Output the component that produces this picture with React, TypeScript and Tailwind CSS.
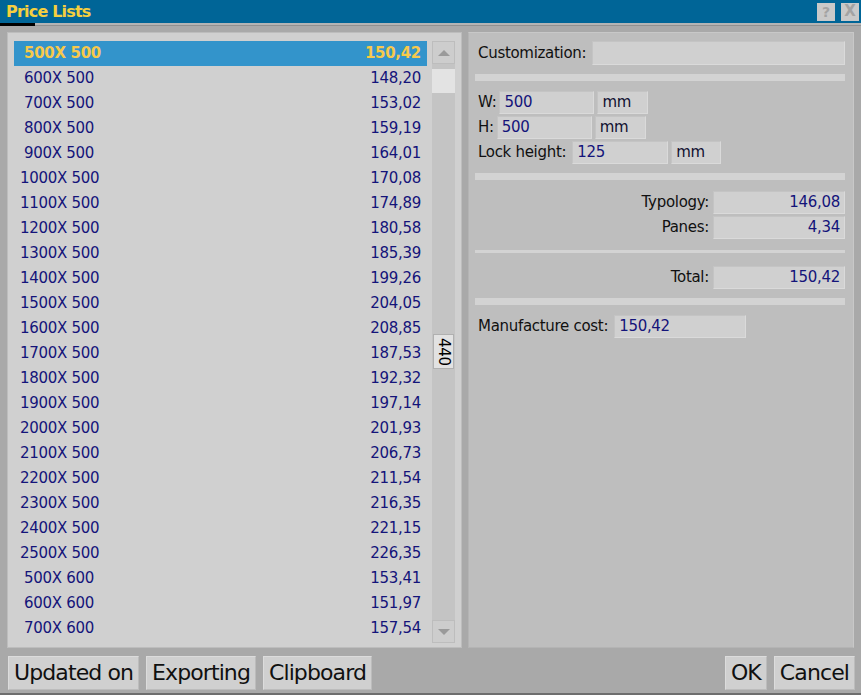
import { useState } from 'react';

const rows: [string, string][] = [
  ['500X 500', '150,42'], ['600X 500', '148,20'], ['700X 500', '153,02'], ['800X 500', '159,19'],
  ['900X 500', '164,01'], ['1000X 500', '170,08'], ['1100X 500', '174,89'], ['1200X 500', '180,58'],
  ['1300X 500', '185,39'], ['1400X 500', '199,26'], ['1500X 500', '204,05'], ['1600X 500', '208,85'],
  ['1700X 500', '187,53'], ['1800X 500', '192,32'], ['1900X 500', '197,14'], ['2000X 500', '201,93'],
  ['2100X 500', '206,73'], ['2200X 500', '211,54'], ['2300X 500', '216,35'], ['2400X 500', '221,15'],
  ['2500X 500', '226,35'], ['500X 600', '153,41'], ['600X 600', '151,97'], ['700X 600', '157,54'],
];

const font = { fontFamily: 'Tahoma, "DejaVu Sans", "Noto Sans", sans-serif' };

function Box({ className = '', children }: { className?: string; children?: React.ReactNode }) {
  return (
    <div className={`h-[23px] bg-[#d0d0d0] border border-t-[#c4c4c4] border-l-[#c4c4c4] border-b-[#dadada] border-r-[#dadada] flex items-center px-[4px] text-[15px] text-[#14147a] ${className}`}>
      {children}
    </div>
  );
}

function Sep({ thin = false }: { thin?: boolean }) {
  return <div className={`${thin ? 'h-[3px]' : 'h-[7px]'} bg-[#d3d3d3] mr-[8px]`} />;
}

function Btn({ children }: { children: React.ReactNode }) {
  return (
    <button className="h-[34px] px-[5px] bg-[#d0d0d0] border border-t-[#dcdcdc] border-l-[#dcdcdc] border-b-[#bcbcbc] border-r-[#bcbcbc] text-[22px] tracking-[-0.9px] text-[#101010] leading-none whitespace-nowrap">
      {children}
    </button>
  );
}

export default function App() {
  const [selected, setSelected] = useState(0);

  return (
    <div className="w-[861px] h-[695px] bg-[#a9a9a9] flex flex-col overflow-hidden tracking-[-0.3px]" style={font}>
      {/* title bar */}
      <div className="h-[23px] bg-[#006597] flex items-center justify-between pl-[6px] pr-[2px]">
        <span className="text-[16px] font-bold text-[#f5cf3f] leading-none tracking-[-0.8px]">Price Lists</span>
        <div className="flex gap-[6px]">
          <div className="w-[18px] h-[18px] bg-[#c9c9c9] flex items-center justify-center text-[14px] font-bold text-[#a3a3a3] leading-none">?</div>
          <div className="w-[18px] h-[18px] bg-[#c9c9c9] flex items-center justify-center text-[15px] font-bold text-[#a3a3a3] leading-none">X</div>
        </div>
      </div>
      <div className="h-[3px] flex">
        <div className="w-[35px] bg-black" />
        <div className="flex-1 bg-[#b4b4b4] border-b border-[#909090]" />
      </div>

      {/* main */}
      <div className="flex gap-[6px] px-[7px] pt-[6px] h-[622px]">
        {/* list panel */}
        <div className="w-[455px] bg-[#d0d0d0] border border-[#bdbdbd] flex pl-[6px] pt-[8px] pb-[4px] relative">
          <div className="w-[413px] flex flex-col">
            {rows.map(([name, price], i) => (
              <div
                key={name}
                onClick={() => setSelected(i)}
                className={`h-[25px] shrink-0 flex items-center justify-between pr-[6px] text-[15px] cursor-default ${
                  i === selected ? 'bg-[#3394cb] text-[#f7c94b] font-bold' : 'text-[#14147a]'
                } ${name.length > 8 ? 'pl-[6px]' : 'pl-[10px]'}`}
              >
                <span>{name}</span>
                <span>{price}</span>
              </div>
            ))}
          </div>
          {/* scrollbar */}
          <div className="w-[23px] ml-[5px] flex flex-col bg-[#c4c4c4]">
            <div className="h-[23px] bg-[#cdcdcd] border border-[#bdbdbd] flex items-center justify-center">
              <div className="w-0 h-0 border-l-[6px] border-r-[6px] border-b-[6px] border-l-transparent border-r-transparent border-b-[#9a9a9a]" />
            </div>
            <div className="h-[24px] mt-[5px] bg-[#e3e3e3]" />
            <div className="flex-1" />
            <div className="h-[23px] bg-[#cdcdcd] border border-[#bdbdbd] flex items-center justify-center">
              <div className="w-0 h-0 border-l-[6px] border-r-[6px] border-t-[6px] border-l-transparent border-r-transparent border-t-[#9a9a9a]" />
            </div>
          </div>
          <div className="absolute left-[425px] top-[301px] w-[21px] h-[35px] bg-[#e2e2e2] border border-[#b0b0b0] flex items-center justify-center text-[15px] text-black [writing-mode:vertical-rl]">
            440
          </div>
        </div>

        {/* detail panel */}
        <div className="flex-1 bg-[#bebebe] border border-t-[#c8c8c8] border-l-[#b4b4b4] border-r-[#c8c8c8] border-b-[#b4b4b4] pl-[6px] pt-[8px] text-[15px] text-[#101010]">
          <div className="flex items-center gap-[6px] pl-[3px] mr-[8px]">
            <span>Customization:</span>
            <Box className="flex-1 h-[24px]" />
          </div>
          <div className="mt-[9px]"><Sep /></div>

          <div className="mt-[10px] flex flex-col gap-[2px] pl-[3px]">
            <div className="flex items-center gap-[3px]">
              <span>W:</span>
              <Box className="w-[95px]">500</Box>
              <Box className="w-[51px] text-[#101030]">mm</Box>
            </div>
            <div className="flex items-center gap-[3px]">
              <span>H:</span>
              <Box className="w-[95px]">500</Box>
              <Box className="w-[51px] text-[#101030]">mm</Box>
            </div>
            <div className="flex items-center gap-[3px]">
              <span className="mr-[3px]">Lock height:</span>
              <Box className="w-[96px]">125</Box>
              <Box className="w-[50px] text-[#101030]">mm</Box>
            </div>
          </div>
          <div className="mt-[9px]"><Sep /></div>

          <div className="mt-[11px] flex flex-col gap-[2px] mr-[8px]">
            <div className="flex items-center justify-end gap-[4px]">
              <span>Typology:</span>
              <Box className="w-[132px] justify-end">146,08</Box>
            </div>
            <div className="flex items-center justify-end gap-[4px]">
              <span>Panes:</span>
              <Box className="w-[132px] justify-end">4,34</Box>
            </div>
          </div>
          <div className="mt-[11px]"><Sep thin /></div>

          <div className="mt-[13px] flex items-center justify-end gap-[4px] mr-[8px]">
            <span>Total:</span>
            <Box className="w-[132px] justify-end">150,42</Box>
          </div>
          <div className="mt-[9px]"><Sep /></div>

          <div className="mt-[10px] flex items-center gap-[6px] pl-[3px]">
            <span>Manufacture cost:</span>
            <Box className="w-[132px]">150,42</Box>
          </div>
        </div>
      </div>

      {/* buttons */}
      <div className="flex items-center justify-between pl-[8px] pr-[6px] pt-[8px]">
        <div className="flex gap-[7px]">
          <Btn>Updated on</Btn>
          <Btn>Exporting</Btn>
          <Btn>Clipboard</Btn>
        </div>
        <div className="flex gap-[7px]">
          <Btn>OK</Btn>
          <Btn>Cancel</Btn>
        </div>
      </div>
      <div className="flex-1" />
      <div className="h-[2px] bg-[#6e6e6e]" />
    </div>
  );
}
